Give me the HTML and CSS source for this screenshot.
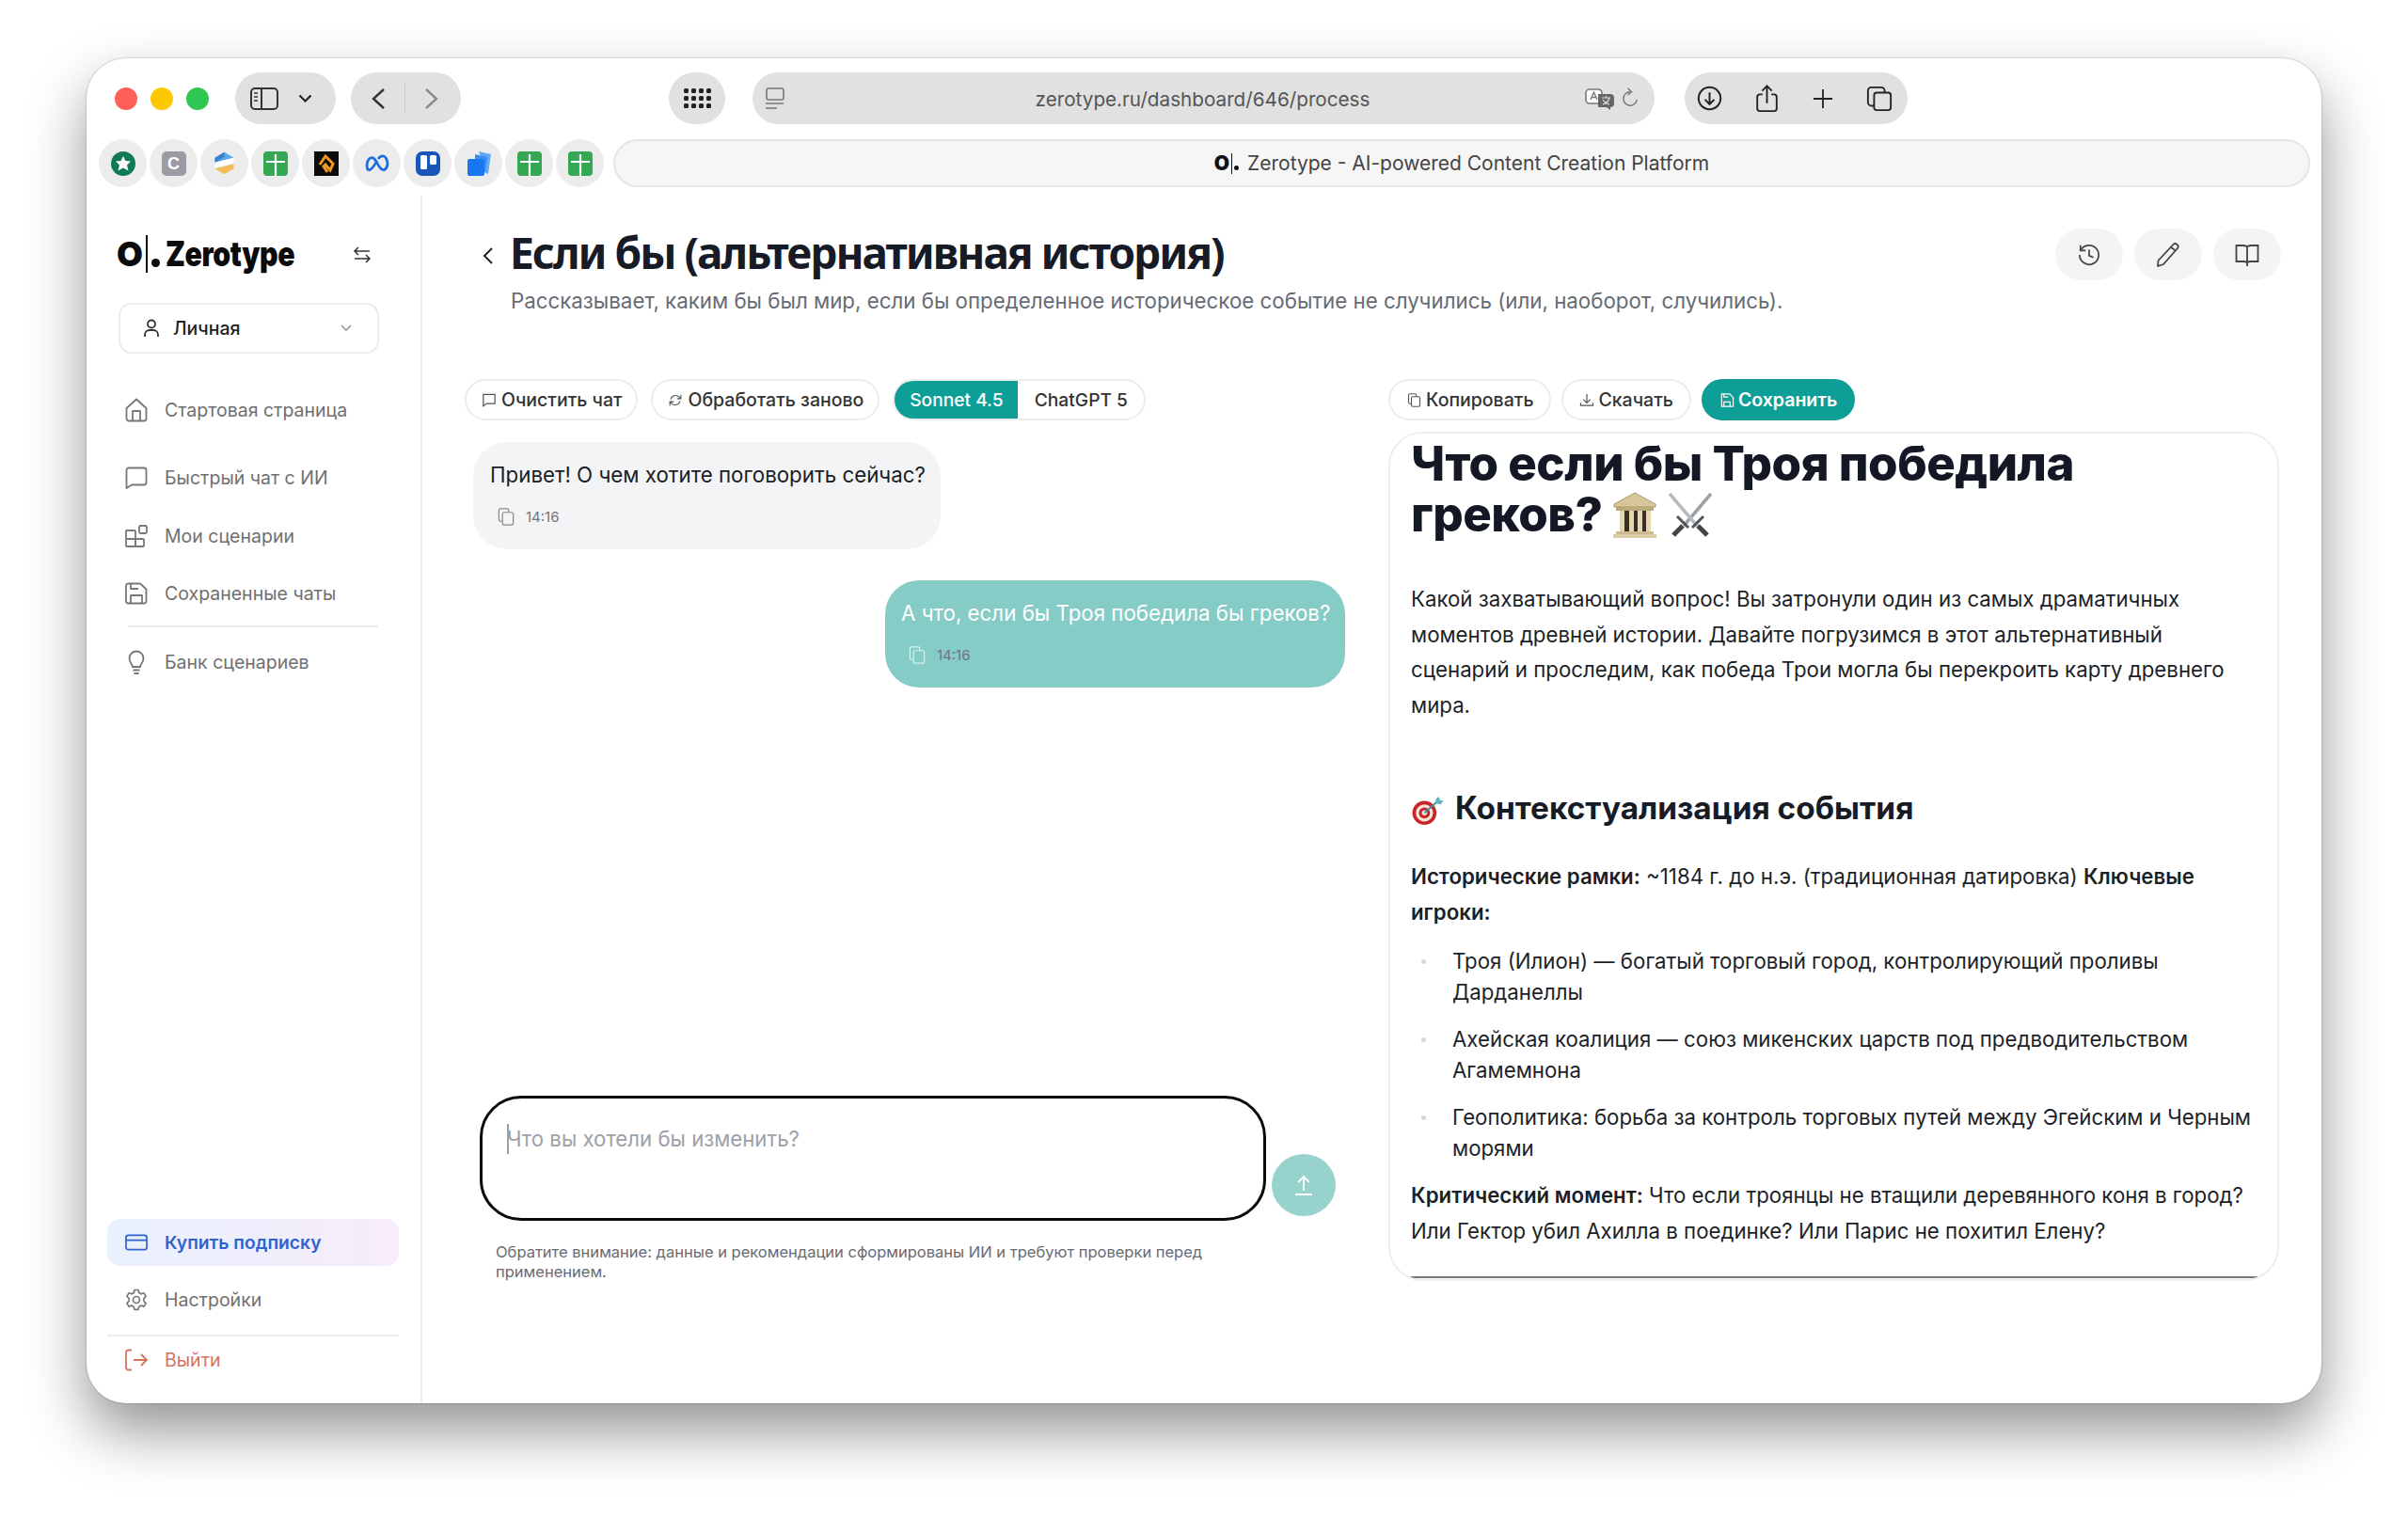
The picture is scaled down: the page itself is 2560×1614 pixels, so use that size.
FILE: index.html
```html
<!DOCTYPE html>
<html lang="ru">

<head>
  <meta charset="UTF-8">
  <meta name="viewport" content="width=device-width, initial-scale=1.0">
  <title>Zerotype</title>
  <link rel="stylesheet" href="styles.css">
</head>

<body>
  <div class="window">
    <!-- browser toolbar -->
    <div class="toolbar">
      <span class="light red"></span>
      <span class="light yellow"></span>
      <span class="light green"></span>
      <div class="pill side-pill">
        <svg width="30" height="24" viewBox="0 0 30 24" fill="none" stroke="#333" stroke-width="2"><rect x="1" y="1" width="28" height="22" rx="4"/><path d="M12 1v22"/><path d="M4 6h4M4 10h4M4 14h4" stroke-width="1.5"/></svg>
        <svg width="15" height="10" viewBox="0 0 15 10" fill="none" stroke="#222" stroke-width="2.2"><path d="M1.500 1.500l6 6 6-6"/></svg>
      </div>
      <div class="pill nav-pill">
        <svg width="14" height="22" viewBox="0 0 14 22" fill="none" stroke="#333" stroke-width="2.4"><path d="M13 1L2 11l11 10"/></svg>
        <span class="nav-sep"></span>
        <svg width="14" height="22" viewBox="0 0 14 22" fill="none" stroke="#8a8a8a" stroke-width="2.4"><path d="M1 1l11 10L1 21"/></svg>
      </div>
      <div class="pill grid-pill">
        <svg width="29" height="22" viewBox="0 0 29 22" fill="#222"><rect x="0" y="0" width="5" height="5" rx="1.5"/><rect x="8" y="0" width="5" height="5" rx="1.5"/><rect x="16" y="0" width="5" height="5" rx="1.5"/><rect x="24" y="0" width="5" height="5" rx="1.5"/><rect x="0" y="8" width="5" height="5" rx="1.5"/><rect x="8" y="8" width="5" height="5" rx="1.5"/><rect x="16" y="8" width="5" height="5" rx="1.5"/><rect x="24" y="8" width="5" height="5" rx="1.5"/><rect x="0" y="16" width="5" height="5" rx="1.5"/><rect x="8" y="16" width="5" height="5" rx="1.5"/><rect x="16" y="16" width="5" height="5" rx="1.5"/><rect x="24" y="16" width="5" height="5" rx="1.5"/></svg>
      </div>
      <div class="pill address">
        <svg class="reader-icon" width="20" height="24" viewBox="0 0 20 24" fill="none" stroke="#777" stroke-width="1.6"><rect x="1" y="1" width="18" height="12" rx="2"/><path d="M0 17h19M0 22h12"/></svg>
        <span class="url">zerotype.ru/dashboard/646/process</span>
        <div class="address-right">
          <svg width="32" height="26" viewBox="0 0 32 26" fill="none"><rect x="1" y="3" width="17" height="15" rx="4" fill="#fff" stroke="#777" stroke-width="1.6"/><path d="M6 14l3.500-8 3.500 8M7 11.500h5" stroke="#777" stroke-width="1.3"/><path d="M14 8h13a4 4 0 0 1 4 4v6a4 4 0 0 1-4 4v3l-4-3h-9z" fill="#666"/><path d="M18 12h9M22.500 10v2M26 12c-1 4-4 6-7 7M19 14c1 2 4 4 7 5" stroke="#ddd" stroke-width="1.2"/></svg>
          <svg width="20" height="24" viewBox="0 0 24 30" fill="none" stroke="#777" stroke-width="1.8"><path d="M12 6a9 9 0 1 0 9 10"/><path d="M9 1l5 5-5 4"/></svg>
        </div>
      </div>
      <div class="pill tools-pill">
        <svg width="27" height="27" viewBox="0 0 30 30" fill="none" stroke="#222" stroke-width="2.200"><circle cx="15" cy="15" r="13"/><path d="M15 8v14M9.500 16.500L15 22l5.500-5.500"/></svg>
        <svg width="25" height="30" viewBox="0 0 26 32" fill="none" stroke="#222" stroke-width="2"><path d="M8 11H5a3 3 0 0 0-3 3v13a3 3 0 0 0 3 3h16a3 3 0 0 0 3-3V14a3 3 0 0 0-3-3h-3"/><path d="M13 21V2M7.500 7L13 1.500 18.500 7"/></svg>
        <svg width="22" height="22" viewBox="0 0 24 24" fill="none" stroke="#222" stroke-width="2"><path d="M12 1v22M1 12h22"/></svg>
        <svg width="28" height="28" viewBox="0 0 30 30" fill="none" stroke="#222" stroke-width="2"><rect x="9" y="8" width="19" height="20" rx="3"/><path d="M9 23H6a4 4 0 0 1-4-4V6a4 4 0 0 1 4-4h11a4 4 0 0 1 4 4v2"/></svg>
      </div>
    </div>

    <!-- bookmarks and tab -->
    <div class="tabbar">
      <span class="fav">
        <svg width="26" height="26" viewBox="0 0 26 26"><circle cx="13" cy="13" r="13" fill="#0f7a55"/><path d="M13 5l2.500 5 5.500.5-4 4 1.500 6-5.500-3-5.500 3 1.500-6-4-4 5.500-.5z" fill="#fff"/></svg>
      </span>
      <span class="fav"><span class="fav-c">C</span></span>
      <span class="fav">
        <svg width="23" height="25" viewBox="0 0 26 30"><path d="M13 1l12 7-24 6V8z" fill="#5aa9ea"/><path d="M1 14l24-6v7L1 21z" fill="#fff"/><path d="M25 15v7l-12 7-12-7 24-6z" fill="#f4bd5a"/><path d="M1 8l12-7v6L1 14z" fill="#3d80cc"/></svg>
      </span>
      <span class="fav">
        <svg width="26" height="26" viewBox="0 0 26 26"><rect width="26" height="26" rx="4" fill="#34a853"/><path d="M13 3v23M3 11h20" stroke="#fff" stroke-width="2.200"/></svg>
      </span>
      <span class="fav">
        <svg width="26" height="26" viewBox="0 0 26 26"><rect width="26" height="26" fill="#0c0c0c"/><path d="M6 14l6-9 8 8-3 7-5-6-2 2 4 6" fill="none" stroke="#f09a1e" stroke-width="3"/></svg>
      </span>
      <span class="fav">
        <svg width="26" height="19" viewBox="0 0 28 20" fill="none" stroke="#1a6fe0" stroke-width="3"><path d="M4 18c-3-3-2-10 1-13 3-3 6-1 9 5s6 9 9 7 4-8 1-13c-2-3-6-3-9 1"/><path d="M14 7c-3 5-6 11-10 11"/></svg>
      </span>
      <span class="fav">
        <svg width="26" height="26" viewBox="0 0 26 26"><rect width="26" height="26" rx="7" fill="#1a56b8"/><rect x="5" y="4" width="7" height="15" rx="1.500" fill="#fff"/><rect x="15" y="4" width="7" height="10" rx="1.500" fill="#fff"/></svg>
      </span>
      <span class="fav">
        <svg width="26" height="26" viewBox="0 0 26 26"><path d="M13 0l13 3-3 21-3-1z" fill="#62a8f5"/><path d="M9 3l13 3-2 16-11-4z" fill="#3a8cf0"/><rect x="1" y="8" width="18" height="18" rx="2" fill="#1877f2"/></svg>
      </span>
      <span class="fav">
        <svg width="26" height="26" viewBox="0 0 26 26"><rect width="26" height="26" rx="4" fill="#34a853"/><path d="M13 3v23M3 11h20" stroke="#fff" stroke-width="2.200"/></svg>
      </span>
      <span class="fav">
        <svg width="26" height="26" viewBox="0 0 26 26"><rect width="26" height="26" rx="4" fill="#34a853"/><path d="M13 3v23M3 11h20" stroke="#fff" stroke-width="2.200"/></svg>
      </span>
      <div class="tab">
        <span class="tab-mark">O<i class="tab-bar-line"></i><i class="tab-dot"></i></span>
        <span>Zerotype - AI-powered Content Creation Platform</span>
      </div>
    </div>

    <div class="app">
      <!-- sidebar -->
      <aside class="sidebar">
        <div class="logo-row">
          <div class="logo">
            <span class="logo-o">O</span><i class="logo-bar"></i><i class="logo-dot"></i><span class="logo-name">Zerotype</span>
          </div>
          <svg class="swap-icon" width="20" height="20" viewBox="0 0 20 20" fill="none" stroke="#333" stroke-width="1.500"><path d="M18 6H2M6 2L2 6l4 4M2 14h16M14 10l4 4-4 4" transform="translate(0 -1)"/></svg>
        </div>

        <div class="account">
          <svg width="18" height="20" viewBox="0 0 18 20" fill="none" stroke="#333" stroke-width="1.800"><circle cx="9" cy="5.500" r="4"/><path d="M2 19v-2a5 5 0 0 1 5-5h4a5 5 0 0 1 5 5v2"/></svg>
          <span class="account-name">Личная</span>
          <svg class="account-arrow" width="14" height="10" viewBox="0 0 14 10" fill="none" stroke="#999" stroke-width="1.600"><path d="M2 2l5 5 5-5"/></svg>
        </div>

        <a class="nav-item first">
          <svg width="24" height="26" viewBox="0 0 24 26" fill="none" stroke="#777" stroke-width="1.800" stroke-linejoin="round"><path d="M1.500 11L12 1.500 22.500 11v11a2.500 2.500 0 0 1-2.500 2.500H4A2.500 2.500 0 0 1 1.500 22z"/><path d="M8 24.500V14h8v10.500"/></svg>
          <span>Стартовая страница</span>
        </a>
        <a class="nav-item chat">
          <svg width="24" height="24" viewBox="0 0 24 24" fill="none" stroke="#777" stroke-width="1.800" stroke-linejoin="round"><path d="M1.500 4A2.500 2.500 0 0 1 4 1.500h16A2.500 2.500 0 0 1 22.500 4v13a2.500 2.500 0 0 1-2.500 2.500H7l-5.500 3.500z"/></svg>
          <span>Быстрый чат с ИИ</span>
        </a>
        <a class="nav-item scenarios">
          <svg width="24" height="24" viewBox="0 0 24 24" fill="none" stroke="#777" stroke-width="1.800"><rect x="1" y="6" width="10" height="9" rx="1"/><rect x="1" y="15" width="10" height="8" rx="1"/><rect x="11" y="15" width="9" height="8" rx="1"/><rect x="15" y="1" width="8" height="8" rx="1.500"/></svg>
          <span>Мои сценарии</span>
        </a>
        <a class="nav-item saved">
          <svg width="24" height="24" viewBox="0 0 24 24" fill="none" stroke="#777" stroke-width="1.800" stroke-linejoin="round"><path d="M3.500 1.500H16l6.500 6V20a2.500 2.500 0 0 1-2.500 2.500H3.500A2.500 2.500 0 0 1 1 20V4a2.500 2.500 0 0 1 2.500-2.500z"/><path d="M6 22.500V14h12v8.500M6 1.500V7h8"/></svg>
          <span>Сохраненные чаты</span>
        </a>
        <div class="nav-sep-line"></div>
        <a class="nav-item bank">
          <svg width="24" height="26" viewBox="0 0 24 26" fill="none" stroke="#777" stroke-width="1.800"><path d="M8 18c0-3-3.500-4-3.500-9a7.500 7.500 0 0 1 15 0c0 5-3.500 6-3.500 9z"/><path d="M8.500 21.500h7M9.500 25h5"/></svg>
          <span>Банк сценариев</span>
        </a>

        <a class="nav-item buy">
          <svg width="25" height="20" viewBox="0 0 25 20" fill="none" stroke="#2f63d0" stroke-width="1.800"><rect x="1" y="2" width="23" height="16" rx="2.500"/><path d="M1 7.500h23"/></svg>
          <span>Купить подписку</span>
        </a>
        <a class="nav-item settings">
          <svg width="24" height="26" viewBox="0 0 24 24" fill="none" stroke="#777" stroke-width="1.700" stroke-linejoin="round"><path d="M10 1.500h4l.7 3 2.400 1.300 3-1 2 3.500-2.200 2.200v2.900l2.200 2.200-2 3.500-3-1-2.400 1.300-.7 3h-4l-.7-3-2.400-1.300-3 1-2-3.500 2.200-2.200v-2.900L1.900 8.300l2-3.500 3 1 2.400-1.300z"/><circle cx="12" cy="12" r="3.500"/></svg>
          <span>Настройки</span>
        </a>
        <div class="bottom-line"></div>
        <a class="nav-item logout">
          <svg width="24" height="24" viewBox="0 0 24 24" fill="none" stroke="#d4735c" stroke-width="1.800"><path d="M7 1.500H3.500A2.500 2.500 0 0 0 1 4v16a2.500 2.500 0 0 0 2.500 2.500H7M9 12h14M17 6l6 6-6 6"/></svg>
          <span>Выйти</span>
        </a>
      </aside>

      <!-- main -->
      <main class="main">
        <div class="head">
          <svg class="back" width="13" height="18" viewBox="0 0 13 18" fill="none" stroke="#222" stroke-width="2"><path d="M11 1L3 9l8 8"/></svg>
          <div class="head-text">
            <h1 class="title">Если бы (альтернативная история)</h1>
            <p class="subtitle">Рассказывает, каким бы был мир, если бы определенное историческое событие не случились (или, наоборот, случились).</p>
          </div>
          <div class="head-tools">
            <span class="round-btn"><svg width="24" height="24" viewBox="0 0 26 26" fill="none" stroke="#444" stroke-width="1.900"><path d="M3.500 7.500A11 11 0 1 1 2 13"/><path d="M3 2v6h6M13 7v7l5 2"/></svg></span>
            <span class="round-btn"><svg width="26" height="26" viewBox="0 0 26 26" fill="none" stroke="#444" stroke-width="1.800" stroke-linejoin="round"><path d="M18 2.500a3 3 0 0 1 5 3.500L8 23l-6 2 .5-6z"/><path d="M16 5l5 3.500"/></svg></span>
            <span class="round-btn"><svg width="26" height="24" viewBox="0 0 26 24" fill="none" stroke="#444" stroke-width="1.800"><path d="M1.500 2H9c2 0 4 1 4 2 0-1 2-2 4-2h7.500v17H17c-2 0-4 .5-4 2 0-1.500-2-2-4-2H1.500zM13 4v20"/></svg></span>
          </div>
        </div>

        <div class="columns">
          <section class="chat-col">
            <div class="actions">
              <button class="btn">
                <svg width="16" height="15" viewBox="0 0 18 17" fill="none" stroke="#555" stroke-width="1.400"><path d="M2 1.500h14v11H6l-4 3z"/></svg>
                Очистить чат
              </button>
              <button class="btn redo">
                <svg width="16" height="15" viewBox="0 0 18 18" fill="none" stroke="#555" stroke-width="1.400"><path d="M3 8a6.500 6.500 0 0 1 11-3l2 2M15 10a6.500 6.500 0 0 1-11 3l-2-2M16 2v5h-5M2 16v-5h5"/></svg>
                Обработать заново
              </button>
              <div class="model-switch">
                <span class="model active">Sonnet 4.5</span>
                <span class="model">ChatGPT 5</span>
              </div>
            </div>

            <div class="messages">
              <div class="bubble bot">
                <p class="bubble-text">Привет! О чем хотите поговорить сейчас?</p>
                <div class="bubble-meta">
                  <svg width="20" height="19" viewBox="0 0 20 20" fill="none" stroke="#888" stroke-width="1.300"><rect x="6" y="5" width="12" height="14" rx="2"/><path d="M6 15H4a2 2 0 0 1-2-2V3a2 2 0 0 1 2-2h7a2 2 0 0 1 2 2v2"/></svg>
                  <span>14:16</span>
                </div>
              </div>
              <div class="bubble user">
                <p class="bubble-text">А что, если бы Троя победила бы греков?</p>
                <div class="bubble-meta">
                  <svg width="20" height="19" viewBox="0 0 20 20" fill="none" stroke="#d8f0ee" stroke-width="1.300"><rect x="6" y="5" width="12" height="14" rx="2"/><path d="M6 15H4a2 2 0 0 1-2-2V3a2 2 0 0 1 2-2h7a2 2 0 0 1 2 2v2"/></svg>
                  <span>14:16</span>
                </div>
              </div>
            </div>

            <div class="composer">
              <div class="input-box"><i class="caret"></i><span class="placeholder">Что вы хотели бы изменить?</span></div>
              <span class="send">
                <svg width="20" height="22" viewBox="0 0 20 22" fill="none" stroke="#fff" stroke-width="1.800"><path d="M10 17V2M4 8l6-6 6 6M1 21h18"/></svg>
              </span>
            </div>
            <p class="notice">Обратите внимание: данные и рекомендации сформированы ИИ и требуют проверки перед применением.</p>
          </section>

          <section class="result-col">
            <div class="actions">
              <button class="btn">
                <svg width="17" height="15" viewBox="0 0 20 20" fill="none" stroke="#555" stroke-width="1.500"><rect x="6" y="5" width="12" height="14" rx="2"/><path d="M6 15H4a2 2 0 0 1-2-2V3a2 2 0 0 1 2-2h7a2 2 0 0 1 2 2v2"/></svg>
                Копировать
              </button>
              <button class="btn">
                <svg width="16" height="15" viewBox="0 0 16 16" fill="none" stroke="#555" stroke-width="1.300"><path d="M8 1v10M4 7l4 4 4-4M1 11v3h14v-3"/></svg>
                Скачать
              </button>
              <button class="btn save">
                <svg width="16" height="15" viewBox="0 0 16 16" fill="none" stroke="#fff" stroke-width="1.300"><path d="M2 1h9l4 4v10H2z"/><path d="M4.500 15v-5h7v5M4.500 1v3.500h5"/></svg>
                Сохранить
              </button>
            </div>

            <article class="doc">
              <h1 class="doc-h1">Что если бы Троя победила греков?
                <svg class="emoji" width="48" height="50" viewBox="0 0 48 50"><path d="M24 1L46 13v3H2v-3z" fill="#d6c69a" stroke="#a8986c"/><rect x="4" y="16" width="40" height="4" fill="#b9a878"/><path d="M8 20h6v22H8zM18 20h5v22h-5zM27 20h5v22h-5zM36 20h5v22h-5z" fill="#e4d8b4"/><path d="M13 20h5v22h-5zM23 20h4v22h-4zM32 20h4v22h-4z" fill="#3a2f22"/><rect x="4" y="42" width="40" height="3" fill="#cbbb8e"/><rect x="1" y="45" width="46" height="4" fill="#d9cba3"/></svg>
                <svg class="emoji" width="48" height="50" viewBox="0 0 48 50" fill="none"><path d="M46 2L17 36" stroke="#9aa2a8" stroke-width="3.500"/><path d="M2 2l29 34" stroke="#b4bbc0" stroke-width="3.500"/><path d="M10 26l12 12M38 26L26 38" stroke="#555" stroke-width="3"/><path d="M16 36l-10 10M32 36l10 10" stroke="#444" stroke-width="5"/></svg>
              </h1>

              <p class="doc-p intro">Какой захватывающий вопрос! Вы затронули один из самых драматичных моментов древней истории. Давайте погрузимся в этот альтернативный сценарий и проследим, как победа Трои могла бы перекроить карту древнего мира.</p>

              <h2 class="doc-h2">
                <svg class="target" width="36" height="31" viewBox="0 0 38 34"><circle cx="15" cy="19" r="14" fill="#c8252c"/><circle cx="15" cy="19" r="10" fill="#f3e4d8"/><circle cx="15" cy="19" r="6.500" fill="#c8252c"/><circle cx="15" cy="19" r="3" fill="#f3e4d8"/><path d="M15 19L32 4" stroke="#3b8f9e" stroke-width="2"/><path d="M28 3l4-3 1 4 4 1-3 4-5-1z" fill="#57b6c4"/></svg>
                Контекстуализация события
              </h2>

              <p class="doc-p hist"><b>Исторические рамки:</b> ~1184 г. до н.э. (традиционная датировка) <b>Ключевые игроки:</b></p>

              <ul class="doc-list">
                <li>Троя (Илион) — богатый торговый город, контролирующий проливы Дарданеллы</li>
                <li>Ахейская коалиция — союз микенских царств под предводительством Агамемнона</li>
                <li>Геополитика: борьба за контроль торговых путей между Эгейским и Черным морями</li>
              </ul>

              <p class="doc-p crit"><b>Критический момент:</b> Что если троянцы не втащили деревянного коня в город? Или Гектор убил Ахилла в поединке? Или Парис не похитил Елену?</p>

              <hr class="doc-hr">
            </article>
          </section>
        </div>
      </main>
    </div>
  </div>
</body>

</html>
```

FILE: styles.css
```css
* {
  margin: 0;
  padding: 0;
  box-sizing: border-box;
}

body {
  background: #ffffff;
  font-family: Inter, "Liberation Sans", sans-serif;
  color: #1a1d26;
  width: 2560px;
  height: 1614px;
  overflow: hidden;
}

.window {
  width: 2376px;
  height: 1430px;
  margin: 62px 0 0 92px;
  background: #ffffff;
  border-radius: 42px;
  box-shadow: 0 30px 62px rgba(0, 0, 0, 0.42), 0 0 2px rgba(0, 0, 0, 0.35);
  display: flex;
  flex-direction: column;
  overflow: hidden;
}

/* browser toolbar */
.toolbar {
  display: flex;
  align-items: center;
  height: 55px;
  margin-top: 15px;
  padding-left: 30px;
}

.light {
  width: 24px;
  height: 24px;
  border-radius: 50%;
  margin-right: 14px;
}

.light.red {
  background: #ff5f57;
}

.light.yellow {
  background: #fdc800;
}

.light.green {
  background: #2fc653;
  margin-right: 0;
}

.pill {
  height: 55px;
  background: #e1e1e1;
  border-radius: 28px;
  display: flex;
  align-items: center;
}

.side-pill {
  width: 107px;
  margin-left: 28px;
  padding-left: 16px;
  gap: 21px;
}

.nav-pill {
  width: 117px;
  margin-left: 16px;
  padding-left: 22px;
}

.nav-sep {
  width: 1px;
  height: 34px;
  background: #cfcfcf;
  margin: 0 21px;
}

.grid-pill {
  width: 60px;
  margin-left: 221px;
  justify-content: center;
}

.address {
  width: 959px;
  margin-left: 29px;
  padding: 1px 16px 0 14px;
  display: grid;
  grid-template-columns: 1fr auto 1fr;
  align-items: center;
}

.url {
  font-size: 20.700px;
  color: #555555;
}

.address-right {
  display: flex;
  align-items: center;
  justify-content: flex-end;
  gap: 6px;
}

.tools-pill {
  width: 237px;
  margin-left: 32px;
  padding: 0 16px 0 13px;
  justify-content: space-between;
}

.tabbar {
  display: flex;
  align-items: center;
  height: 51px;
  margin-top: 16px;
  padding: 0 12px 0 13px;
  gap: 3px;
}

.fav {
  width: 51px;
  height: 51px;
  flex: none;
  border-radius: 50%;
  background: #ececec;
  display: flex;
  align-items: center;
  justify-content: center;
}

.fav-c {
  width: 26px;
  height: 26px;
  border-radius: 5px;
  background: #9b9ba3;
  color: #ffffff;
  font-family: "Liberation Sans", sans-serif;
  font-weight: 700;
  font-size: 18px;
  line-height: 26px;
  text-align: center;
}

.tab {
  flex: 1;
  height: 51px;
  margin-left: 7px;
  background: #f6f6f6;
  border: 2px solid #e6e6e6;
  border-radius: 26px;
  display: flex;
  align-items: center;
  justify-content: center;
  gap: 9px;
  font-size: 21px;
  color: #444444;
}

.tab-mark {
  display: flex;
  align-items: center;
  font-weight: 900;
  font-size: 21px;
  color: #111111;
}

.tab-bar-line {
  width: 1px;
  height: 22px;
  background: #111111;
  margin: 0 2px;
}

.tab-dot {
  width: 5px;
  height: 5px;
  background: #111111;
  border-radius: 50%;
  margin-top: 9px;
}

/* app */
.app {
  flex: 1;
  display: flex;
  margin-top: 10px;
  min-height: 0;
}

.sidebar {
  width: 357px;
  flex: none;
  border-right: 2px solid #eeeeee;
  padding: 39px 23px 21px 22px;
  display: flex;
  flex-direction: column;
}

.logo-row {
  height: 44px;
  display: flex;
  align-items: center;
  padding-left: 10px;
}

.logo {
  display: flex;
  align-items: center;
  color: #0b0b0b;
  font-weight: 900;
}

.logo-o {
  font-size: 36px;
  line-height: 44px;
  width: 24px;
}

.logo-bar {
  width: 2px;
  height: 40px;
  background: #0b0b0b;
  margin-left: 7px;
}

.logo-dot {
  width: 9px;
  height: 9px;
  border-radius: 50%;
  background: #0b0b0b;
  margin: 18px 6px 0 4px;
}

.logo-name {
  width: 137px;
  font-size: 37px;
  line-height: 44px;
  letter-spacing: -0.5px;
  white-space: nowrap;
  transform: scaleX(0.818);
  transform-origin: left center;
}

.swap-icon {
  margin-left: 62px;
  margin-top: 4px;
}

.account {
  width: 277px;
  height: 54px;
  margin: 30px 0 0 12px;
  border: 2px solid #ececec;
  border-radius: 14px;
  display: flex;
  align-items: center;
  padding-left: 24px;
  gap: 14px;
  font-size: 19.500px;
  font-weight: 500;
  color: #222222;
  flex: none;
}

.account-arrow {
  margin-left: auto;
  margin-right: 26px;
}

.nav-item {
  height: 50px;
  flex: none;
  display: flex;
  align-items: center;
  padding-left: 19px;
  font-size: 19.500px;
  color: #6f6f6f;
}

.nav-item svg {
  width: 24px;
  margin-right: 18px;
  flex: none;
}

.nav-item.first {
  margin-top: 35px;
}

.nav-item.chat {
  margin-top: 22px;
}

.nav-item.scenarios {
  margin-top: 12px;
}

.nav-item.saved {
  margin-top: 11px;
}

.nav-sep-line {
  height: 2px;
  width: 266px;
  margin: 9px 0 0 22px;
  background: #ececec;
  flex: none;
}

.nav-item.bank {
  margin-top: 12px;
}

.nav-item.buy {
  margin-top: auto;
  height: 50px;
  border-radius: 14px;
  background: linear-gradient(90deg, #e9f0fd, #f7ecfb);
  color: #2f63d0;
  font-weight: 600;
  font-size: 19.300px;
}

.nav-item.settings {
  margin-top: 11px;
}

.bottom-line {
  height: 2px;
  background: #ececec;
  margin-top: 12px;
  flex: none;
}

.nav-item.logout {
  color: #d4735c;
}

/* main column */
.main {
  flex: 1;
  min-width: 0;
  padding: 29px 41px 0 45px;
}

.head {
  display: flex;
  padding-left: 18px;
  height: 98px;
}

.back {
  margin-top: 25px;
  margin-right: 17px;
  flex: none;
}

.title {
  font-family: "Noto Sans", sans-serif;
  font-weight: 700;
  font-size: 46px;
  line-height: 60px;
  color: #171b26;
  letter-spacing: -2px;
}

.subtitle {
  margin: 6px 0 0 1px;
  font-size: 22.300px;
  line-height: 32px;
  color: #666b74;
}

.head-tools {
  margin-left: auto;
  margin-right: 2px;
  display: flex;
  gap: 12px;
  margin-top: 5px;
}

.round-btn {
  width: 72px;
  height: 55px;
  border-radius: 28px;
  background: #f3f4f6;
  display: flex;
  align-items: center;
  justify-content: center;
}

.columns {
  display: grid;
  grid-template-columns: 946px 947px;
  gap: 36px;
  margin-top: 67px;
}

.actions {
  display: flex;
  gap: 14px;
  height: 44px;
}

.result-col .actions {
  gap: 11px;
}

.btn {
  height: 44px;
  padding: 0 15px 0 16px;
  border: 2px solid #ececec;
  border-radius: 22px;
  background: #ffffff;
  font-family: Inter, sans-serif;
  font-size: 19.500px;
  font-weight: 500;
  color: #333333;
  display: flex;
  align-items: center;
  gap: 5px;
}

.result-col .btn {
  padding: 0 17px;
  gap: 4px;
}

.btn.save {
  background: #0d9f97;
  border-color: #0d9f97;
  color: #ffffff;
  font-weight: 600;
}

.model-switch {
  display: flex;
  width: 269px;
  height: 44px;
  border: 2px solid #ececec;
  border-radius: 22px;
  overflow: hidden;
  font-size: 19.200px;
  font-weight: 500;
  color: #333333;
}

.model {
  flex: 1;
  display: flex;
  align-items: center;
  justify-content: center;
}

.model.active {
  flex: none;
  width: 131px;
  background: #0d9f97;
  color: #ffffff;
}

/* chat */
.messages {
  height: 718px;
  padding: 23px 10px 0 9px;
  display: flex;
  flex-direction: column;
  gap: 33px;
}

.bubble {
  height: 114px;
  border-radius: 36px;
  padding: 18px 18px 0;
}

.bubble.bot {
  width: 497px;
  background: #f3f4f6;
}

.bubble.user {
  width: 489px;
  align-self: flex-end;
  background: #86ccc6;
  color: #ffffff;
  padding-left: 17px;
}

.bubble-text {
  font-size: 22.300px;
  line-height: 34px;
  white-space: nowrap;
}

.bubble-meta {
  margin: 18px 0 0 7px;
  display: flex;
  align-items: center;
  gap: 11px;
  font-size: 15px;
  color: #6f7480;
}

.composer {
  display: flex;
  margin-left: 16px;
  gap: 6px;
}

.input-box {
  width: 836px;
  height: 133px;
  border: 3px solid #0a0a0a;
  border-radius: 44px;
  padding: 27px 0 0 26px;
  display: flex;
  font-size: 22.200px;
  line-height: 32px;
  color: #9ca1a9;
}

.caret {
  width: 2px;
  height: 32px;
  background: #9ca1a9;
  margin-right: -2px;
}

.send {
  width: 68px;
  height: 66px;
  border-radius: 50%;
  background: #98d2cd;
  margin-top: 62px;
  display: flex;
  align-items: center;
  justify-content: center;
}

.notice {
  margin: 23px 0 0 33px;
  width: 790px;
  font-size: 16.500px;
  line-height: 21px;
  color: #666b74;
}

/* result document */
.doc {
  margin-top: 12px;
  height: 903px;
  border: 2px solid #eeeeee;
  border-radius: 36px;
  padding: 5px 21px 0 22px;
  overflow: hidden;
}

.doc-h1 {
  font-size: 51px;
  line-height: 54px;
  font-weight: 800;
  letter-spacing: -0.5px;
  color: #141824;
}

.emoji {
  vertical-align: -8px;
}

.doc-p {
  font-size: 22.250px;
  line-height: 37.500px;
  color: #1c1f27;
}

.doc-p b {
  font-weight: 600;
}

.intro {
  margin-top: 44px;
}

.doc-h2 {
  margin-top: 69px;
  font-size: 33.400px;
  line-height: 44px;
  font-weight: 700;
  color: #171b26;
}

.target {
  vertical-align: -7px;
  margin-right: 3px;
}

.hist {
  margin-top: 32px;
}

.doc-list {
  list-style: none;
  margin-top: 17px;
}

.doc-list li {
  position: relative;
  padding-left: 44px;
  font-size: 22.250px;
  line-height: 33px;
  margin-bottom: 17px;
  color: #1c1f27;
}

.doc-list li::before {
  content: "";
  position: absolute;
  left: 11px;
  top: 15px;
  width: 5px;
  height: 5px;
  border-radius: 50%;
  background: #d6d6d6;
}

.crit {
  margin-top: -2px;
}

.doc-hr {
  border: none;
  height: 2px;
  background: #777777;
  margin-top: 30px;
}
```
